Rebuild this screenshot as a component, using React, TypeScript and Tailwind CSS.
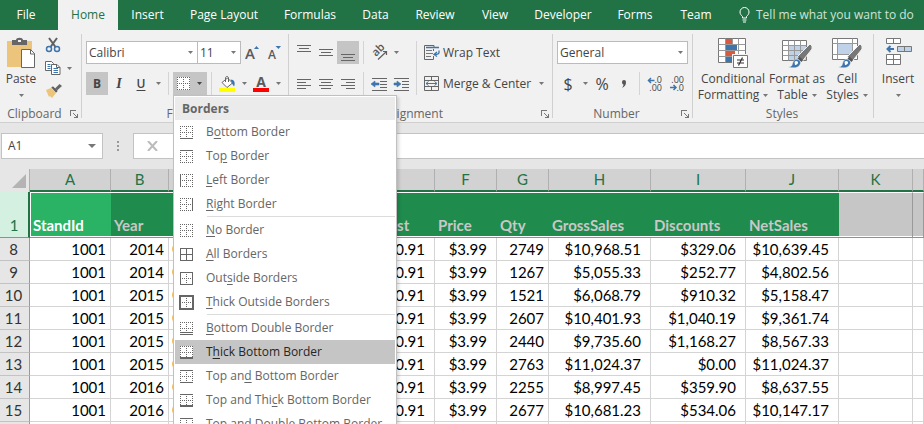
import type { ReactNode } from "react"

const tabs = [
  { label: "Insert", width: "w-[59px]" },
  { label: "Page Layout", width: "w-[94px]" },
  { label: "Formulas", width: "w-[78px]" },
  { label: "Data", width: "w-[53px]" },
  { label: "Review", width: "w-[66px]" },
  { label: "View", width: "w-[54px]" },
  { label: "Developer", width: "w-[82px]" },
  { label: "Forms", width: "w-[62px]" },
  { label: "Team", width: "w-[60px]" },
]

type BorderKind =
  | "bottom" | "top" | "left" | "right" | "none" | "all" | "outside"
  | "thickOutside" | "bottomDouble" | "thickBottom" | "topBottom" | "topThickBottom" | "topDoubleBottom"

// "&" marks the access key of each entry
const borderMenu: { label: string; kind: BorderKind }[][] = [
  [
    { label: "B&ottom Border", kind: "bottom" },
    { label: "To&p Border", kind: "top" },
    { label: "&Left Border", kind: "left" },
    { label: "&Right Border", kind: "right" },
  ],
  [
    { label: "&No Border", kind: "none" },
    { label: "&All Borders", kind: "all" },
    { label: "Out&side Borders", kind: "outside" },
    { label: "&Thick Outside Borders", kind: "thickOutside" },
  ],
  [
    { label: "&Bottom Double Border", kind: "bottomDouble" },
    { label: "T&hick Bottom Border", kind: "thickBottom" },
    { label: "Top an&d Bottom Border", kind: "topBottom" },
    { label: "Top and Thi&ck Bottom Border", kind: "topThickBottom" },
    { label: "Top and Do&uble Bottom Border", kind: "topDoubleBottom" },
  ],
]

const columns = [
  { letter: "A", title: "StandId", width: "w-[81px]" },
  { letter: "B", title: "Year", width: "w-[58px]" },
  { letter: "", title: "", width: "w-[89px]" },
  { letter: "", title: "", width: "w-[89px]" },
  { letter: "", title: "UnitCost", width: "w-[88px]" },
  { letter: "F", title: "Price", width: "w-[62px]" },
  { letter: "G", title: "Qty", width: "w-[52px]" },
  { letter: "H", title: "GrossSales", width: "w-[102px]" },
  { letter: "I", title: "Discounts", width: "w-[95px]" },
  { letter: "J", title: "NetSales", width: "w-[93px]" },
  { letter: "K", title: "", width: "w-[74px]" },
  { letter: "", title: "", width: "" },
]

const rows = [
  { n: 8, year: 2014, qty: 2749, gross: "$10,968.51", disc: "$329.06", net: "$10,639.45" },
  { n: 9, year: 2014, qty: 1267, gross: "$5,055.33", disc: "$252.77", net: "$4,802.56" },
  { n: 10, year: 2015, qty: 1521, gross: "$6,068.79", disc: "$910.32", net: "$5,158.47" },
  { n: 11, year: 2015, qty: 2607, gross: "$10,401.93", disc: "$1,040.19", net: "$9,361.74" },
  { n: 12, year: 2015, qty: 2440, gross: "$9,735.60", disc: "$1,168.27", net: "$8,567.33" },
  { n: 13, year: 2015, qty: 2763, gross: "$11,024.37", disc: "$0.00", net: "$11,024.37" },
  { n: 14, year: 2016, qty: 2255, gross: "$8,997.45", disc: "$359.90", net: "$8,637.55" },
  { n: 15, year: 2016, qty: 2677, gross: "$10,681.23", disc: "$534.06", net: "$10,147.17" },
]

function Arrow({ className = "text-[#777]" }: { className?: string }) {
  return (
    <svg width="5" height="3" viewBox="0 0 5 3" className={`shrink-0 ${className}`} aria-hidden="true">
      <path d="M0 0h5L2.5 3z" fill="currentColor" />
    </svg>
  )
}

function ArrowButton({ label }: { label: string }) {
  return (
    <button type="button" aria-label={label} className="flex h-full w-3 items-center justify-center">
      <Arrow />
    </button>
  )
}

function IconButton({ label, active, children }: { label: string; active?: boolean; children: ReactNode }) {
  return (
    <button
      type="button"
      aria-label={label}
      className={`flex h-full w-[22px] shrink-0 items-center justify-center ${active ? "bg-[#c5c5c5]" : ""}`}
    >
      {children}
    </button>
  )
}

function Divider() {
  return <div className="mx-1 w-px shrink-0 self-stretch bg-[#d4d4d4]" />
}

function Group({ title, width, launcher, children }: { title: string; width: string; launcher?: boolean; children: ReactNode }) {
  return (
    <>
      <section aria-label={title} className={`flex shrink-0 flex-col justify-between ${width}`}>
        {children}
        <div className="flex h-4 items-center pr-[2px] text-[#666]">
          <span className="flex-1 text-center leading-4">{title}</span>
          {launcher && (
            <button type="button" aria-label={`${title} settings`} className="px-px">
              <svg width="8" height="8" viewBox="0 0 8 8" fill="none" stroke="#777" shapeRendering="crispEdges">
                <path d="M.5 6V.5H6M3 3l4 4M7.5 3.500V7.500H3.500" />
              </svg>
            </button>
          )}
        </div>
      </section>
      <div className="my-1 w-px shrink-0 bg-[#d0d0d0]" />
    </>
  )
}

function Dropdown({ label, value, className }: { label: string; value: string; className: string }) {
  return (
    <div className={`relative h-full ${className}`}>
      <select
        aria-label={label}
        className="h-full w-full appearance-none border border-[#bbb] bg-white px-[2px] text-[#444] outline-none"
      >
        <option>{value}</option>
      </select>
      <span className="pointer-events-none absolute inset-y-0 right-[5px] flex items-center">
        <Arrow />
      </span>
    </div>
  )
}

// three or four text lines, each given as [x, width]
function Lines({ lines, y = 0 }: { lines: [number, number][]; y?: number }) {
  return (
    <svg width="14" height="16" viewBox="0 0 14 16" shapeRendering="crispEdges" fill="#666">
      {lines.map(([x, w], i) => (
        <rect key={i} x={x} y={y + i * 3} width={w} height="1" />
      ))}
    </svg>
  )
}

function BorderIcon({ kind }: { kind: BorderKind }) {
  const box = kind === "all" || kind === "outside" || kind === "thickOutside"
  return (
    <svg width="15" height="15" viewBox="0 0 15 15" fill="none" stroke="#666" shapeRendering="crispEdges" className="shrink-0">
      <rect x="1" y="1" width="13" height="13" fill="#fff" stroke="none" />
      {!box && <path d="M1 1.500h13M1 13.500h13M1.500 1v13M13.500 1v13" strokeDasharray="1 1" />}
      {kind === "all" ? (
        <path d="M1.500 1.500h12v12h-12zM7.500 1v13M1 7.500h13" />
      ) : (
        <path d="M7.500 3v10M3 7.500h10" strokeDasharray="1 1" />
      )}
      {kind === "outside" && <path d="M1.500 1.500h12v12h-12z" />}
      {kind === "thickOutside" && <path d="M1 1h13v13H1z" strokeWidth="2" />}
      {kind === "left" && <path d="M1.500 1v13" />}
      {kind === "right" && <path d="M13.500 1v13" />}
      {(kind === "top" || kind === "topBottom" || kind === "topThickBottom" || kind === "topDoubleBottom") && <path d="M1 1.500h13" />}
      {(kind === "bottom" || kind === "topBottom") && <path d="M1 13.500h13" />}
      {(kind === "thickBottom" || kind === "topThickBottom") && <path d="M1 13h13" strokeWidth="2" />}
      {(kind === "bottomDouble" || kind === "topDoubleBottom") && <path d="M1 11.500h13M1 13.500h13" />}
    </svg>
  )
}

function MenuLabel({ text }: { text: string }) {
  const at = text.indexOf("&")
  return (
    <span>
      {text.slice(0, at)}
      <span className="underline underline-offset-2">{text[at + 1]}</span>
      {text.slice(at + 2)}
    </span>
  )
}

function BordersMenu() {
  return (
    <div
      role="menu"
      className="absolute top-full left-0 z-20 w-[224px] border border-[#c0c0c0] bg-white p-px text-[#666] shadow-[2px_2px_3px_rgba(0,0,0,0.15)]"
    >
      <div className="h-[23px] bg-[#ebebeb] pl-[7px] leading-[23px] font-bold">Borders</div>
      {borderMenu.map((section, i) => (
        <div key={i}>
          {i > 0 && <div className="mb-px ml-8 h-px bg-[#dcdcdc]" />}
          {section.map((item) => (
            <button
              key={item.kind}
              type="button"
              role="menuitem"
              className={`flex h-6 w-full items-center gap-3 pl-1 text-left whitespace-nowrap ${
                item.kind === "thickBottom" ? "bg-[#c5c5c5] text-[#262626]" : ""
              }`}
            >
              <BorderIcon kind={item.kind} />
              <MenuLabel text={item.label} />
            </button>
          ))}
        </div>
      ))}
    </div>
  )
}

function PasteIcon() {
  return (
    <svg width="30" height="32" viewBox="0 0 30 32" fill="none">
      <path d="M1 4h25v26H1z" fill="#ecc47b" />
      <path d="M6 8V3h4c0-3 7-3 7 0h4v5z" fill="#666" />
      <path d="M12 3h3v2h-3z" fill="#f1f1f1" />
      <path d="M15.500 12.500h9l4 4V30.500h-13z" fill="#fff" stroke="#666" />
      <path d="M24.500 12.500v4.500h4" stroke="#666" />
    </svg>
  )
}

function CutIcon() {
  return (
    <svg width="16" height="16" viewBox="0 0 16 16" fill="none">
      <path d="M4 1l6.500 9M12 1L5.500 10" stroke="#5f5f5f" strokeWidth="2" />
      <circle cx="4" cy="12" r="2.500" stroke="#3e75ad" strokeWidth="1.500" />
      <circle cx="12" cy="12" r="2.500" stroke="#3e75ad" strokeWidth="1.500" />
    </svg>
  )
}

function CopyIcon() {
  return (
    <svg width="16" height="14" viewBox="0 0 16 14" fill="#fff" stroke="#666">
      <path d="M.5.5h6l2 2v7h-8z" />
      <path d="M2.500 3.500h3M2.500 5.500h3M2.500 7.500h3" stroke="#3e75ad" />
      <path d="M6.500 3.500h5.500l3 3v7H6.500z" />
      <path d="M11.500 3.500v3H15" fill="none" />
      <path d="M8.500 7.500h4.500M8.500 9.500h4.500M8.500 11.500h4.500" stroke="#3e75ad" />
    </svg>
  )
}

function BrushIcon() {
  return (
    <svg width="17" height="14" viewBox="0 0 17 14">
      <path d="M1 6l5-2 5 5-4 5-2-2-1 1z" fill="#ecc47b" />
      <path d="M6 3.500L8 2l5 5-2 2z" fill="#5f5f5f" stroke="#f1f1f1" strokeWidth=".5" />
      <path d="M10 4.500L14.500 0 17 2l-5 4.500z" fill="#666" />
    </svg>
  )
}

function GrowFontIcon({ shrink }: { shrink?: boolean }) {
  return (
    <svg width="14" height="17" viewBox="0 0 14 17" fill="#5a5a5a" fontFamily="Open Sans, sans-serif" fontWeight="600">
      {shrink ? (
        <>
          <text x="1" y="15" fontSize="12">A</text>
          <path d="M8.500 2H14l-2.500 3z" fill="#3e75ad" />
        </>
      ) : (
        <>
          <text x="0" y="15" fontSize="15">A</text>
          <path d="M9 5h5l-2.500-3z" fill="#3e75ad" />
        </>
      )}
    </svg>
  )
}

function FillIcon() {
  return (
    <svg width="17" height="16" viewBox="0 0 17 16" fill="none">
      <path d="M0 12h16v4H0z" fill="#ff0" />
      <path d="M3 6.500L8.500 2l5 5L8 11.500z" fill="#fff" stroke="#666" />
      <path d="M6.500 6V2c0-2 3-2 3 0v4" stroke="#666" />
      <path d="M11.500 3.500c4 0 5 3.500 3.500 7l-2-3z" fill="#3e75ad" />
    </svg>
  )
}

function FontColorIcon() {
  return (
    <svg width="16" height="16" viewBox="0 0 16 16">
      <text x="8" y="11" textAnchor="middle" fill="#5a5a5a" fontFamily="Open Sans, sans-serif" fontSize="14" fontWeight="700">A</text>
      <path d="M0 12h16v4H0z" fill="#f00" />
    </svg>
  )
}

function OrientationIcon() {
  return (
    <svg width="17" height="17" viewBox="0 0 17 17" fill="none" stroke="#5f5f5f">
      <text
        transform="translate(5 13) rotate(-45)"
        fill="#555"
        stroke="none"
        fontFamily="Open Sans, sans-serif"
        fontSize="11"
        fontWeight="600"
      >
        ab
      </text>
      <path d="M7 15.500l8.500-8M12 7.500h3.500V11" strokeWidth="1.200" />
    </svg>
  )
}

function IndentIcon({ increase }: { increase?: boolean }) {
  return (
    <svg width="17" height="14" viewBox="0 0 17 14" shapeRendering="crispEdges">
      <path d="M1 1h15v1H1zM9 4h7v1H9zM9 7h7v1H9zM9 10h7v1H9zM1 13h15v1H1z" fill="#666" />
      <path d={increase ? "M1 6h3V4l4 3-4 3V8H1z" : "M8 6H4V4L0 7l4 3V8h4z"} fill="#3e75ad" stroke="#3e75ad" strokeWidth=".6" shapeRendering="auto" />
    </svg>
  )
}

function WrapIcon() {
  return (
    <svg width="16" height="16" viewBox="0 0 16 16" fill="none" stroke="#666">
      <path d="M10 .500H.500v14h9M9.500 11v3.500M10 .500v1.500M9.500 4v2" />
      <path d="M2 5.500h6M2 8.500h7M2 11.500h5" stroke="#777" />
      <path d="M2 2.500h13M15 5.500v2c0 1.500-1 2-4.500 2M13 7l-3 2.500 3 2" stroke="#3e75ad" strokeWidth="1.300" />
    </svg>
  )
}

function MergeIcon() {
  return (
    <svg width="16" height="16" viewBox="0 0 16 16" fill="none" stroke="#666">
      <path d="M.5.500h14v14H.500zM.500 4.500h14M.500 10.500h14M7.500.500v4M7.500 10.500v4" />
      <path d="M2 7.500h11M4.500 5.500l-2.500 2 2.500 2M10.500 5.500l2.500 2-2.500 2" stroke="#3e75ad" />
    </svg>
  )
}

// blue arrow beside the short or long run of decimals
function DecimalIcon({ decrease }: { decrease?: boolean }) {
  return (
    <svg width="16" height="16" viewBox="0 0 16 16" fill="none">
      <g fill="#444" fontFamily="Open Sans, sans-serif" fontSize="9">
        <text x="15" y="7" textAnchor="end">{decrease ? ".00" : ".0"}</text>
        <text x="15" y="15" textAnchor="end">{decrease ? ".0" : ".00"}</text>
      </g>
      <path
        d={decrease ? "M1 11.500h6M4.500 9l2.500 2.500L4.500 14" : "M7.500 4.500H1M4 2L1.500 4.500 4 7"}
        stroke="#3e75ad"
        strokeWidth="1.500"
      />
    </svg>
  )
}

function ConditionalIcon() {
  return (
    <svg width="30" height="32" viewBox="0 0 30 32" fill="none" stroke="#777">
      <path d="M.500 1.500h27v24H.500z" fill="#fff" />
      <path d="M.500 7.500h27M.500 13.500h27M.500 19.500h27M7.500 1.500v24M14.500 1.500v24M20.500 1.500v24" stroke="#999" />
      <path d="M8 2h6v5H8zM8 14h9v5H8z" fill="#d9593d" stroke="none" />
      <path d="M8 8h11v5H8zM8 20h6v5H8z" fill="#3e75ad" stroke="none" />
      <path d="M14 17h16v14H14z" fill="#f1f1f1" stroke="none" />
      <path d="M15.500 18.500h14v12h-14z" fill="#fff" />
      <path d="M19 23h7M19 26h7M24.500 20.500l-4 8" stroke="#333" strokeWidth="1.200" />
    </svg>
  )
}

function Brush() {
  return (
    <>
      <path d="M28 7l2 2v3L20.500 24l-5-4.500z" fill="#777" stroke="#f1f1f1" />
      <path d="M17.500 19.500l3.500 3.500-1.500 2-4-3.500z" fill="#555" stroke="none" />
      <path d="M6.500 30c4 0 3.500-3 5-6 2-3.500 8-1 7 2.500-1.500 5-8 5-12 3.500z" fill="#3e75ad" stroke="#f1f1f1" strokeWidth=".5" />
      <path d="M12.500 25c1-2 4-1 3.500 1-.5 1.500-2 2-3 2z" fill="#fff" stroke="none" />
    </>
  )
}

function FormatTableIcon() {
  return (
    <svg width="30" height="32" viewBox="0 0 30 32" fill="none" stroke="#777">
      <path d="M.500 3.500h24v20H.500z" fill="#fff" />
      <path d="M7 9h17v14H7z" fill="#bfd2e8" stroke="none" />
      <path d="M.500 8.500h24M.500 13.500h24M.500 18.500h24M6.500 3.500v20M12.500 3.500v20M18.500 3.500v20" stroke="#999" />
      <Brush />
    </svg>
  )
}

function CellStylesIcon() {
  return (
    <svg width="30" height="32" viewBox="0 0 30 32" fill="none" stroke="#777">
      <path d="M.500 1.500h25v21H.500z" fill="#fff" />
      <path d="M.500 6.500h25M.500 17.500h25M5.500 1.500v21M20.500 1.500v21" stroke="#999" />
      <path d="M6 7h14v10H6z" fill="#bfd2e8" stroke="none" />
      <Brush />
    </svg>
  )
}

function InsertCellsIcon() {
  return (
    <svg width="28" height="32" viewBox="0 0 28 32" fill="#fff" stroke="#777">
      <path d="M2.500 1.500h14v5h-14zM9.500 1.500v5M2.500 17.500h14v10h-14zM2.500 22.500h14M9.500 17.500v10" />
      <path d="M13.500 9.500h14v5h-14zM20.500 9.500v5" fill="#bfd2e8" />
      <path d="M10 12H5M6.500 9L3.500 12l3 3" fill="none" stroke="#3e75ad" strokeWidth="2" />
    </svg>
  )
}

function LargeButton({ icon, lines, width }: { icon: ReactNode; lines: string[]; width: string }) {
  return (
    <button type="button" className={`flex shrink-0 flex-col items-center whitespace-nowrap ${width}`}>
      <span className="mb-[2px] h-8">{icon}</span>
      <span className="leading-4">{lines[0]}</span>
      <span className="flex h-4 items-center gap-1 leading-4">
        {lines[1]}
        <Arrow />
      </span>
    </button>
  )
}

function Ribbon() {
  return (
    <div className="flex h-[93px] border-b border-[#cfcfcf] bg-[#f1f1f1] text-[#444]">
      <Group title="Clipboard" width="w-[81px]" launcher>
        <div className="flex pt-[7px]">
          <LargeButton icon={<PasteIcon />} lines={["Paste", ""]} width="w-[42px]" />
          <div className="flex flex-col gap-[7px] pl-[3px]">
            <button type="button" aria-label="Cut" className="h-4 w-4"><CutIcon /></button>
            <button type="button" aria-label="Copy" className="flex h-4 items-center gap-[6px]">
              <CopyIcon />
              <Arrow />
            </button>
            <button type="button" aria-label="Format Painter" className="h-4 w-4"><BrushIcon /></button>
          </div>
        </div>
      </Group>

      <Group title="Font" width="w-[206px]" launcher>
        <div className="flex flex-col gap-2 pt-[11px] pl-1">
          <div className="flex h-[23px]">
            <Dropdown label="Font name" value="Calibri" className="w-[112px]" />
            <Dropdown label="Font size" value="11" className="-ml-px w-[44px]" />
            <IconButton label="Increase font size"><GrowFontIcon /></IconButton>
            <IconButton label="Decrease font size"><GrowFontIcon shrink /></IconButton>
          </div>
          <div className="flex h-[23px]">
            <IconButton label="Bold" active><b>B</b></IconButton>
            <IconButton label="Italic"><i className="font-['Liberation_Serif',serif] text-sm font-bold">I</i></IconButton>
            <IconButton label="Underline"><span className="font-semibold underline underline-offset-2">U</span></IconButton>
            <ArrowButton label="Underline styles" />
            <Divider />
            <div className="relative">
              <button type="button" aria-label="Borders" aria-expanded="true" className="flex h-full w-[34px] items-center gap-[6px] bg-[#c5c5c5] pl-[3px]">
                <BorderIcon kind="none" />
                <Arrow className="text-[#444]" />
              </button>
              <BordersMenu />
            </div>
            <Divider />
            <IconButton label="Fill color"><FillIcon /></IconButton>
            <ArrowButton label="Fill colors" />
            <IconButton label="Font color"><FontColorIcon /></IconButton>
            <ArrowButton label="Font colors" />
          </div>
        </div>
      </Group>

      <Group title="Alignment" width="w-[263px]" launcher>
        <div className="flex pt-[11px] pl-1">
          <div className="flex w-[119px] flex-col gap-2">
            <div className="flex h-[23px]">
              <IconButton label="Top align"><Lines lines={[[0, 14], [2, 10], [0, 14]]} /></IconButton>
              <IconButton label="Middle align"><Lines lines={[[0, 14], [2, 10], [0, 14]]} y={4} /></IconButton>
              <IconButton label="Bottom align" active><Lines lines={[[0, 14], [2, 10], [0, 14]]} y={9} /></IconButton>
              <Divider />
              <IconButton label="Orientation"><OrientationIcon /></IconButton>
              <ArrowButton label="Orientation options" />
            </div>
            <div className="flex h-[23px]">
              <IconButton label="Align left"><Lines lines={[[0, 14], [0, 9], [0, 14], [0, 9]]} y={3} /></IconButton>
              <IconButton label="Center"><Lines lines={[[0, 14], [2, 10], [0, 14], [2, 10]]} y={3} /></IconButton>
              <IconButton label="Align right"><Lines lines={[[0, 14], [5, 9], [0, 14], [5, 9]]} y={3} /></IconButton>
              <Divider />
              <IconButton label="Decrease indent"><IndentIcon /></IconButton>
              <IconButton label="Increase indent"><IndentIcon increase /></IconButton>
            </div>
          </div>
          <Divider />
          <div className="flex flex-col gap-2 pl-[3px]">
            <button type="button" className="flex h-[23px] items-center gap-[3px]">
              <WrapIcon />
              Wrap Text
            </button>
            <div className="flex h-[23px] gap-1">
              <button type="button" className="flex items-center gap-[3px] whitespace-nowrap">
                <MergeIcon />
                Merge &amp; Center
              </button>
              <ArrowButton label="Merge options" />
            </div>
          </div>
        </div>
      </Group>

      <Group title="Number" width="w-[139px]" launcher>
        <div className="flex flex-col gap-2 pt-[11px] pl-1">
          <div className="flex h-[23px]">
            <Dropdown label="Number format" value="General" className="w-[131px]" />
          </div>
          <div className="flex h-[23px] text-base">
            <IconButton label="Accounting format">$</IconButton>
            <ArrowButton label="Accounting formats" />
            <IconButton label="Percent style">%</IconButton>
            <IconButton label="Comma style">
              <svg width="6" height="8" viewBox="0 0 6 8"><path d="M1 2a2 2 0 1 1 4 0c0 3-1 4.500-4 6 1-1.500 1.500-2.500 1.500-3.500C1.500 4.500 1 3 1 2z" fill="#555" /></svg>
            </IconButton>
            <Divider />
            <IconButton label="Increase decimal"><DecimalIcon /></IconButton>
            <IconButton label="Decrease decimal"><DecimalIcon decrease /></IconButton>
          </div>
        </div>
      </Group>

      <Group title="Styles" width="w-[180px]">
        <div className="flex pt-[7px] pl-1">
          <LargeButton icon={<ConditionalIcon />} lines={["Conditional", "Formatting"]} width="w-[72px]" />
          <LargeButton icon={<FormatTableIcon />} lines={["Format as", "Table"]} width="w-[56px]" />
          <LargeButton icon={<CellStylesIcon />} lines={["Cell", "Styles"]} width="w-[44px]" />
        </div>
      </Group>

      <div className="pt-[7px]">
        <LargeButton icon={<InsertCellsIcon />} lines={["Insert", ""]} width="w-[48px]" />
      </div>
    </div>
  )
}

function FormulaBar() {
  return (
    <div className="flex h-[46px] items-center bg-[#e6e6e6] pl-px">
      <div className="flex h-[26px] w-[102px] items-center border border-[#c3c3c3] bg-white pr-[6px]">
        <input aria-label="Name box" defaultValue="A1" className="w-full min-w-0 flex-1 pl-[6px] text-[#444] outline-none" />
        <button type="button" aria-label="Defined names">
          <svg width="8" height="4" viewBox="0 0 8 4"><path d="M0 0h8L4 4z" fill="#777" /></svg>
        </button>
      </div>
      <svg width="30" height="12" viewBox="0 0 30 12" fill="#999" shapeRendering="crispEdges">
        <path d="M14 1h2v2h-2zM14 5h2v2h-2zM14 9h2v2h-2z" />
      </svg>
      <div className="flex h-[26px] flex-1 items-center border border-r-0 border-[#c3c3c3] bg-white">
        <button type="button" aria-label="Cancel" className="px-[13px]">
          <svg width="11" height="10" viewBox="0 0 11 10" stroke="#bbb" strokeWidth="2"><path d="M1 0l9 10M10 0L1 10" /></svg>
        </button>
        <input aria-label="Formula" className="h-full min-w-0 flex-1 outline-none" />
      </div>
    </div>
  )
}

function Sheet() {
  const num = "border-r border-b border-[#d4d4d4] pr-1"
  const money = "border-r border-b border-[#d4d4d4] pr-[9px]"
  return (
    <table className="w-full table-fixed border-separate border-spacing-0 bg-white font-['Lato',sans-serif] text-[15px] leading-[22px] text-black">
      <colgroup>
        <col className="w-[30px]" />
        {columns.map((c, i) => (
          <col key={i} className={c.width} />
        ))}
      </colgroup>
      <thead>
        <tr className="h-[23px] bg-[#d2d2d2] text-[#217346]">
          <th className="border-r border-[#b0b0b0] bg-[#e6e6e6] p-0 pr-[3px] align-bottom">
            <svg width="14" height="14" viewBox="0 0 14 14" className="mb-1 ml-auto"><path d="M14 0v14H0z" fill="#b4b4b4" /></svg>
          </th>
          {columns.map((c, i) => (
            <th key={i} className="border-r border-b-2 border-r-[#b0b0b0] border-b-[#217346] p-0 leading-[21px] font-normal">{c.letter}</th>
          ))}
        </tr>
      </thead>
      <tbody>
        <tr className="h-[46px] text-left text-[#c8c8c8]">
          <th className="border-r-2 border-b border-r-[#217346] border-b-[#8f8f8f] bg-[#d3f0e0] p-0 pb-px text-center align-bottom font-normal text-[#217346]">1</th>
          {columns.map((c, i) => (
            <th
              key={i}
              className={`border-t border-b border-t-white border-b-[#8f8f8f] p-0 pb-px pl-[3px] align-bottom ${
                i === 0
                  ? "bg-[#2ab364] text-white shadow-[inset_1px_-1px_0_white]"
                  : i < 10
                    ? "bg-[#1f8b4d] shadow-[inset_0_-1px_0_white]"
                    : "border-r border-r-[#999] bg-[#c6c6c6] shadow-[inset_0_-1px_0_white]"
              }`}
            >
              {c.title}
            </th>
          ))}
        </tr>
        {rows.map((r) => (
          <tr key={r.n} className="h-[23px] text-right">
            <th className="border-r border-b border-r-[#999] border-b-[#c3c3c3] bg-[#e6e6e6] p-0 pr-[2px] text-center font-normal text-[#333]">{r.n}</th>
            <td className={num}>1001</td>
            <td className={num}>{r.year}</td>
            <td className="border-r border-b border-[#d4d4d4] pl-[3px]">
              <span className="block h-3 w-3 rounded-full bg-[#f0bd5c]" />
            </td>
            <td className={num}></td>
            <td className={money}>$0.91</td>
            <td className={money}>$3.99</td>
            <td className={num}>{r.qty}</td>
            <td className={money}>{r.gross}</td>
            <td className={money}>{r.disc}</td>
            <td className={money}>{r.net}</td>
            <td className={num}></td>
            <td className={num}></td>
          </tr>
        ))}
        <tr className="h-[23px]">
          <th className="border-r border-r-[#999] bg-[#e6e6e6]"></th>
          {columns.map((_, i) => (
            <td key={i} className="border-r border-[#d4d4d4]"></td>
          ))}
        </tr>
      </tbody>
    </table>
  )
}

export default function App() {
  return (
    <div className="h-screen overflow-hidden bg-[#e6e6e6] font-['Open_Sans',sans-serif] text-xs">
      <nav className="flex h-[30px] items-stretch bg-[#217346] whitespace-nowrap text-white">
        <button type="button" className="w-[58px] pr-[6px]">File</button>
        <button type="button" className="w-[60px] bg-[#f1f1f1] text-[#217346]">Home</button>
        {tabs.map((tab) => (
          <button key={tab.label} type="button" className={tab.width}>{tab.label}</button>
        ))}
        <button type="button" className="flex items-center gap-[6px] pl-[13px] text-[#cfe3d7]">
          <svg width="11" height="16" viewBox="0 0 11 16" fill="none" stroke="#fff">
            <path d="M3.500 11V9.500C2 8 1 7 1 5a4.500 4.500 0 0 1 9 0c0 2-1 3-2.500 4.500V11zM3.500 13h4M4 15h3" />
          </svg>
          Tell me what you want to do
        </button>
      </nav>
      <Ribbon />
      <FormulaBar />
      <Sheet />
    </div>
  )
}
